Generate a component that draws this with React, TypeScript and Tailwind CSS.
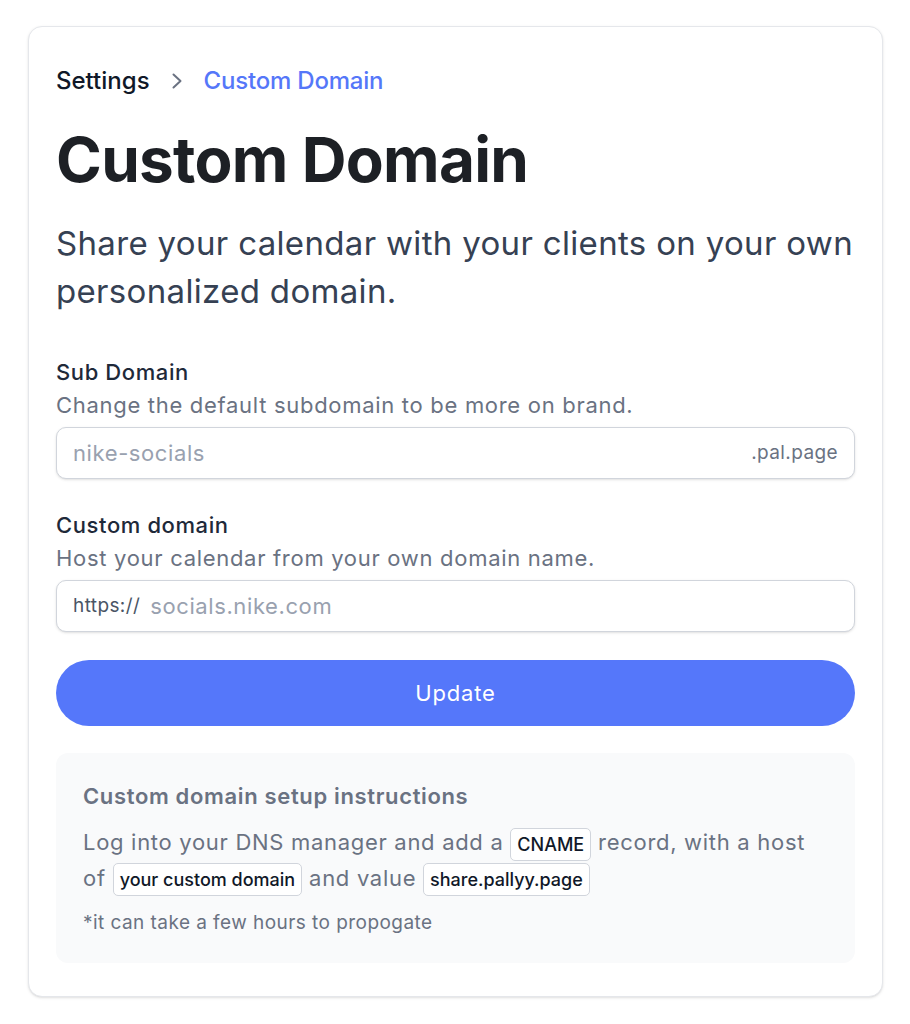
import React from "react";

function Chip({ children }: { children: React.ReactNode }) {
  return (
    <span className="inline-block rounded-[5px] border border-gray-300 bg-white px-[6px] text-[18px] leading-[31px] tracking-normal font-medium text-gray-900 align-middle">
      {children}
    </span>
  );
}

export default function App() {
  return (
    <div
      className="min-h-screen bg-white pl-[28px] pr-[27px] pt-[26px]"
      style={{ fontFamily: "Inter, 'Noto Sans', sans-serif" }}
    >
      <div className="h-[971px] rounded-[14px] border border-gray-200 bg-white px-[27px] pt-[37px] pb-[33px] shadow-sm">
        {/* Breadcrumb */}
        <nav className="flex items-center text-[24px] leading-[33px] font-medium">
          <span className="text-gray-900">Settings</span>
          <svg
            className="mx-[21px] text-gray-500"
            width="12"
            height="16"
            viewBox="0 0 12 16"
            fill="none"
            stroke="currentColor"
            strokeWidth="2"
            strokeLinecap="round"
            strokeLinejoin="round"
          >
            <path d="M2.5 1.5 L9.5 8 L2.5 14.5" />
          </svg>
          <span className="tracking-[-0.2px] text-[#5577f9]">Custom Domain</span>
        </nav>

        {/* Heading */}
        <h1 className="mt-[32px] text-[62px] leading-[62px] font-bold tracking-[-0.7px] text-[#1d2025]">
          Custom Domain
        </h1>

        <p className="mt-[28px] text-[33px] leading-[48px] tracking-[0.33px] text-gray-700">
          Share your calendar with your clients on your own personalized domain.
        </p>

        {/* Sub Domain */}
        <div className="mt-[41px]">
          <div className="text-[22px] leading-[33px] tracking-[0.6px] font-medium text-gray-800">Sub Domain</div>
          <div className="text-[22px] leading-[33px] tracking-[0.7px] text-gray-500">
            Change the default subdomain to be more on brand.
          </div>
          <div className="mt-[5px] flex h-[52px] items-center rounded-[10px] border border-gray-300 bg-white px-[16px] shadow-sm">
            <span className="flex-1 text-[22px] tracking-[0.6px] text-gray-400">nike-socials</span>
            <span className="text-[19px] tracking-[0.4px] text-gray-500">.pal.page</span>
          </div>
        </div>

        {/* Custom domain */}
        <div className="mt-[30px]">
          <div className="text-[22px] leading-[33px] tracking-[0.6px] font-medium text-gray-800">Custom domain</div>
          <div className="text-[22px] leading-[33px] tracking-[0.7px] text-gray-500">
            Host your calendar from your own domain name.
          </div>
          <div className="mt-[5px] flex h-[52px] items-center rounded-[10px] border border-gray-300 bg-white px-[16px] shadow-sm">
            <span className="text-[19px] tracking-[0.4px] text-gray-600">https://</span>
            <span className="ml-[10px] text-[22px] tracking-[0.6px] text-gray-400">socials.nike.com</span>
          </div>
        </div>

        {/* Button */}
        <button className="mt-[28px] flex h-[66px] w-full items-center justify-center rounded-full bg-[#5577fa] text-[22px] tracking-[0.8px] text-white">
          Update
        </button>

        {/* Instructions */}
        <div className="mt-[27px] rounded-[12px] bg-gray-50 px-[27px] pt-[27px] pb-[26px]">
          <div className="text-[22px] leading-[33px] tracking-[0.65px] font-semibold text-gray-500">
            Custom domain setup instructions
          </div>
          <p className="mt-[12px] text-[22px] leading-[35px] tracking-[0.7px] text-gray-500">
            Log into your DNS manager and add a <Chip>CNAME</Chip> record, with a host of{" "}
            <Chip>your custom domain</Chip> and value <Chip>share.pallyy.page</Chip>
          </p>
          <p className="mt-[13px] text-[19px] leading-[28px] tracking-[0.45px] text-gray-500">
            *it can take a few hours to propogate
          </p>
        </div>
      </div>
    </div>
  );
}
